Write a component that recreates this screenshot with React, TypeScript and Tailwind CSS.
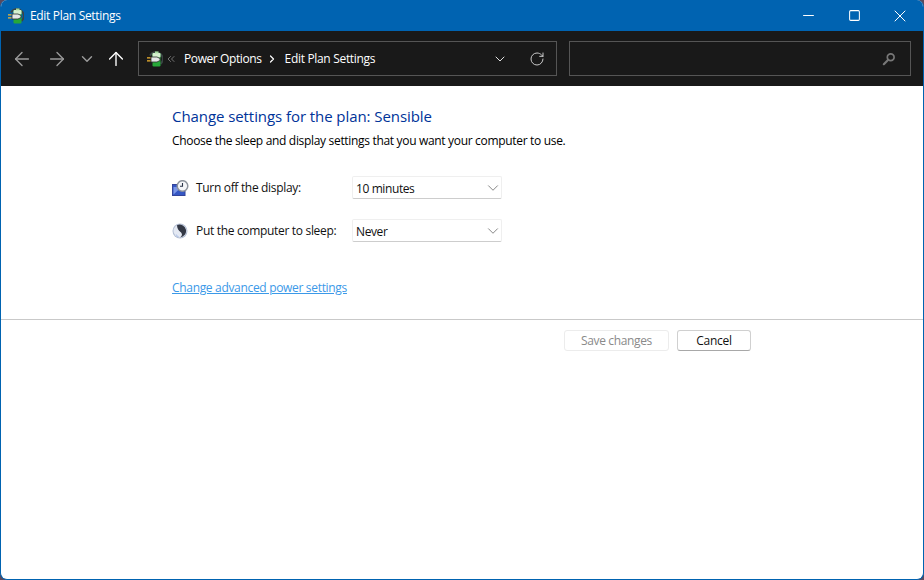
import { ArrowLeft, ArrowRight, ArrowUp, ChevronDown, ChevronRight, ChevronsLeft, Minus, RotateCw, Square, X } from 'lucide-react';

const PowerIcon = () => (
  <svg width="16" height="16" viewBox="0 0 16 16">
    <path d="M3 4.500a6.500 6.500 0 0 1 10.500-1.500a6.500 6.500 0 0 1 0 10" fill="none" stroke="#3a4444" strokeWidth="1.8" />
    <rect x="5.500" y="2" width="8" height="13.500" rx="1.200" fill="#27a838" />
    <rect x="5.500" y="2" width="8" height="4.500" rx="1" fill="#d5efcf" />
    <rect x="8" y="0.500" width="3.500" height="1.800" fill="#a6dba0" />
    <path d="M4 6h6l3 1.500v2L10 11H4z" fill="#e4e6e6" stroke="#2b2f2f" strokeWidth="0.800" />
    <path d="M0 6.800h3.500M0 9.800h3.500" stroke="#f2b531" strokeWidth="1.200" />
  </svg>
);

const DisplayIcon = () => (
  <svg width="17" height="16" viewBox="0 0 17 16">
    <rect x="0.500" y="4.500" width="12.500" height="11" fill="#3557c4" stroke="#33449a" />
    <path d="M1.500 14.500 9.500 7H1.500z" fill="#7c97e6" />
    <circle cx="10.500" cy="6" r="5.300" fill="#f4f5f8" stroke="#8d939c" strokeWidth="1.500" />
    <path d="M10.500 3v3.300H8" fill="none" stroke="#2a3448" strokeWidth="1.100" />
  </svg>
);

const SleepIcon = () => (
  <svg width="16" height="16" viewBox="0 0 16 16">
    <circle cx="8" cy="8" r="7.500" fill="#b4bfd4" />
    <circle cx="8" cy="8" r="6.500" fill="#e4e9f3" />
    <path d="M5 2.200a6.400 6.400 0 1 1 3 12.200c2.500-1.400 2.500-3.800.5-5.400C6.500 7.500 5 5 5 2.200z" fill="#343946" />
    <path d="M3.500 10.500A6 6 0 0 0 9 14.400c-2.300-.2-4.300-1.800-5.500-3.900z" fill="#4f7fd8" />
  </svg>
);

// search glass in the explorer style: ring on the right, handle to the lower left
const SearchIcon = () => (
  <svg width="14" height="14" viewBox="0 0 14 14" fill="none">
    <circle cx="8.700" cy="5.300" r="3.400" stroke="#777777" strokeWidth="1.700" />
    <path d="M6 8 1.800 12.200" stroke="#777777" strokeWidth="2.200" strokeLinecap="round" />
  </svg>
);

const Dropdown = ({ label }: { label: string }) => (
  <div className="flex h-[23px] w-[150px] items-center justify-between rounded-[2px] border border-[#efefef] border-b-[#cdcdcd] bg-white pl-[3px] text-[12px] tracking-[-0.4px] text-[#111111]">
    <span className="pt-[2px]">{label}</span>
    <ChevronDown className="mr-[-1px] h-[18px] w-[18px] text-[#6d6d6d]" strokeWidth={1.1} />
  </div>
);

export default function App() {
  return (
    <div className="h-[580px] w-[924px] overflow-hidden bg-[#5a4a5e] font-['Open_Sans','Noto_Sans',sans-serif]">
      <div className="flex h-full flex-col overflow-hidden rounded-[7px] border-x border-b border-[#0063b1] bg-white">
        {/* title bar */}
        <div className="flex h-[31px] shrink-0 items-center justify-between bg-[#0063b1] pl-[7px] text-white">
          <div className="flex items-center gap-[6px]">
            <PowerIcon />
            <span className="text-[12px] tracking-[-0.32px]">Edit Plan Settings</span>
          </div>
          <div className="flex items-center">
            <div className="flex h-[31px] w-[46px] items-center justify-center"><Minus className="h-[17px] w-[17px]" strokeWidth={1.4} /></div>
            <div className="flex h-[31px] w-[46px] items-center justify-center"><Square className="h-[13px] w-[13px]" strokeWidth={1.9} /></div>
            <div className="flex h-[31px] w-[46px] items-center justify-center"><X className="h-[20px] w-[20px]" strokeWidth={1.2} /></div>
          </div>
        </div>

        {/* address bar */}
        <div className="flex h-[55px] shrink-0 items-center bg-[#191919] pl-[10px] pr-[12px] text-white">
          <ArrowLeft className="h-[22px] w-[22px] text-[#9a9a9a]" strokeWidth={1.5} />
          <ArrowRight className="ml-[13px] h-[22px] w-[22px] text-[#9a9a9a]" strokeWidth={1.5} />
          <ChevronDown className="ml-[10px] h-[18px] w-[18px] text-[#9a9a9a]" strokeWidth={1.9} />
          <ArrowUp className="ml-[9px] h-[22px] w-[22px] text-white" strokeWidth={1.5} />
          <div className="ml-[11px] flex h-[35px] w-[419px] items-center border border-[#555555] pl-[8px] pr-[11px]">
            <PowerIcon />
            <ChevronsLeft className="ml-[2px] h-[12px] w-[12px] text-[#8a8a8a]" strokeWidth={1.6} />
            <span className="ml-[7px] text-[12px] tracking-[-0.4px]">Power Options</span>
            <ChevronRight className="ml-[4px] h-[12px] w-[12px]" strokeWidth={2.4} />
            <span className="ml-[7px] text-[12px] tracking-[-0.32px]">Edit Plan Settings</span>
            <ChevronDown className="ml-auto h-[16px] w-[16px] text-[#e0e0e0]" strokeWidth={1.5} />
            <RotateCw className="ml-[21px] h-[16px] w-[16px] text-[#c8c8c8]" strokeWidth={1.5} />
          </div>
          <div className="ml-[12px] flex h-[35px] flex-1 items-center justify-end border border-[#555555] pr-[14px]">
            <SearchIcon />
          </div>
        </div>

        {/* content */}
        <div className="pt-[20px]">
          <div className="pl-[171px]">
            <h1 className="text-[15px] leading-[20px] tracking-[-0.07px] text-[#003399]">Change settings for the plan: Sensible</h1>
            <p className="mt-[7px] text-[12px] leading-[16px] tracking-[-0.32px] text-black">Choose the sleep and display settings that you want your computer to use.</p>

            <div className="mt-[27px] flex items-center">
              <div className="flex w-[180px] items-center gap-[7px]">
                <DisplayIcon />
                <span className="text-[12px] tracking-[-0.32px] text-[#111111]">Turn off the display:</span>
              </div>
              <Dropdown label="10 minutes" />
            </div>
            <div className="mt-[20px] flex items-center">
              <div className="flex w-[180px] items-center gap-[8px]">
                <SleepIcon />
                <span className="text-[12px] tracking-[-0.32px] text-[#111111]">Put the computer to sleep:</span>
              </div>
              <Dropdown label="Never" />
            </div>

            <a className="mt-[38px] block text-[12px] leading-[16px] tracking-[-0.32px] text-[#3b99e8] underline">Change advanced power settings</a>
          </div>

          <div className="mt-[23px] h-px bg-[#c9c9c9]" />

          <div className="mt-[10px] flex justify-end gap-[8px] pr-[172px]">
            <button className="h-[21px] w-[105px] rounded-[3px] border border-[#ececec] bg-white text-[12px] leading-none tracking-[-0.37px] text-[#8a8a8a]">Save changes</button>
            <button className="h-[21px] w-[74px] rounded-[3px] border border-[#d0d0d0] border-b-[#a8a8a8] bg-white text-[12px] leading-none tracking-[-0.3px] text-[#111111]">Cancel</button>
          </div>
        </div>
      </div>
    </div>
  );
}
